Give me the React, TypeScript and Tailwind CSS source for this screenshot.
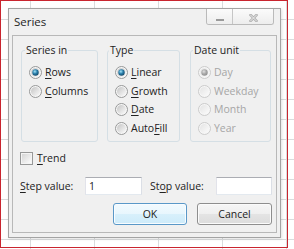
import React from "react";

function Radio({ checked = false, disabled = false }: { checked?: boolean; disabled?: boolean }) {
  return (
    <svg width="13" height="13" viewBox="0 0 13 13" className="shrink-0">
      <defs>
        <linearGradient id="rf-e" x1="0" y1="0" x2="1" y2="1">
          <stop offset="0" stopColor="#c4c4c4" />
          <stop offset="1" stopColor="#fbfbfb" />
        </linearGradient>
        <linearGradient id="rf-d" x1="0" y1="0" x2="1" y2="1">
          <stop offset="0" stopColor="#e4e4e4" />
          <stop offset="1" stopColor="#fbfbfb" />
        </linearGradient>
        <radialGradient id="rd-e" cx="0.4" cy="0.35" r="0.75">
          <stop offset="0" stopColor="#a6e4f8" />
          <stop offset="0.45" stopColor="#2b80ac" />
          <stop offset="1" stopColor="#0e3c5a" />
        </radialGradient>
        <radialGradient id="rd-d" cx="0.4" cy="0.35" r="0.75">
          <stop offset="0" stopColor="#e0e0e0" />
          <stop offset="0.5" stopColor="#a8a8a8" />
          <stop offset="1" stopColor="#8a8a8a" />
        </radialGradient>
      </defs>
      <circle cx="6.5" cy="6.5" r="6" fill="#f6f6f6" stroke={disabled ? "#cbcbcb" : "#979898"} />
      <circle cx="6.5" cy="6.5" r="4.5" fill={disabled ? "url(#rf-d)" : "url(#rf-e)"} />
      {checked && <circle cx="6.5" cy="6.5" r="3.2" fill={disabled ? "url(#rd-d)" : "url(#rd-e)"} />}
    </svg>
  );
}

function RadioRow({
  checked,
  disabled,
  children,
}: {
  checked?: boolean;
  disabled?: boolean;
  children: React.ReactNode;
}) {
  return (
    <div className="flex h-[18.7px] items-center gap-[3px]">
      <Radio checked={checked} disabled={disabled} />
      <span className={disabled ? "text-[#a6a6a6]" : "text-[#222222]"}>{children}</span>
    </div>
  );
}

function U({ children }: { children: React.ReactNode }) {
  return <span className="underline decoration-1 underline-offset-[1.5px]">{children}</span>;
}

function Group({
  title,
  width,
  legendMl,
  children,
}: {
  title: string;
  width: string;
  legendMl: string;
  children: React.ReactNode;
}) {
  return (
    <fieldset className={`${width} h-[98px] rounded-[3px] border border-[#d5dfe5] p-0`}>
      <legend className={`${legendMl} px-[1px] leading-[12px] text-[#222222]`}>{title}</legend>
      <div className="flex flex-col pl-[7px] pt-[7px]">{children}</div>
    </fieldset>
  );
}

function TextBox({ width, value }: { width: string; value?: string }) {
  return (
    <div
      className={`${width} flex h-[18px] items-center border border-[#abadb3] border-b-[#e3e9ef] border-l-[#e2e3ea] border-r-[#dbdfe6] bg-white pl-[3px] text-[#222222]`}
    >
      {value}
    </div>
  );
}

export default function App() {
  return (
    <div className="h-[249px] w-[294px] overflow-hidden bg-white bg-[linear-gradient(to_right,#dadcdd_1px,transparent_1px),linear-gradient(to_bottom,#dadcdd_1px,transparent_1px)] bg-[size:64px_20px] bg-[position:30px_19px] font-['Open_Sans',sans-serif] text-[10.5px] leading-[13px]">
      <div className="h-[248px] w-[288px] border border-[#c9252f] pl-[7px] pt-[7px]">
        {/* Dialog window */}
        <div className="flex h-[230px] w-[273px] flex-col border border-[#a3a3a3] bg-[#f0f0f0] shadow-[1px_1px_3px_rgba(0,0,0,0.12)]">
          {/* Title bar */}
          <div className="flex h-[26px] shrink-0 items-center justify-between pl-[5px] pr-[6px]">
            <span className="text-[11.5px] leading-[14px] text-[#1e1e1e]">Series</span>
            <div className="flex h-[16px] self-start overflow-hidden rounded-b-[3px] border border-t-0 border-[#bababa]">
              <div className="flex w-[26px] justify-center border-r border-[#c6c6c6] bg-[linear-gradient(to_bottom,#fbfbfb,#ededed)] pt-[10px]">
                <div className="h-[2px] w-[8px] bg-[#9a9a9a]" />
              </div>
              <div className="flex w-[40px] justify-center bg-[linear-gradient(to_bottom,#fbfbfb,#ededed)] pt-[5px]">
                <svg width="9" height="8" viewBox="0 0 9 8">
                  <path d="M1.5 1 L7.5 7 M7.5 1 L1.5 7" stroke="#b0b0b0" strokeWidth="2.6" strokeLinecap="square" />
                  <path d="M1.5 1 L7.5 7 M7.5 1 L1.5 7" stroke="#f4f4f4" strokeWidth="0.9" strokeLinecap="square" />
                </svg>
              </div>
            </div>
          </div>
          {/* Client area */}
          <div className="flex flex-1 flex-col px-[3px] pb-[4px]">
            <div className="flex flex-1 flex-col border border-[#b8b8b8] bg-[#f0f0f0]">
              <div className="ml-[8px] mt-[8px] flex">
                <Group title="Series in" width="w-[77px]" legendMl="ml-[3px]">
                  <RadioRow checked>
                    <U>R</U>ows
                  </RadioRow>
                  <RadioRow>
                    <U>C</U>olumns
                  </RadioRow>
                </Group>
                <div className="ml-[9px]">
                  <Group title="Type" width="w-[73px]" legendMl="ml-[1px]">
                    <RadioRow checked>
                      <U>L</U>inear
                    </RadioRow>
                    <RadioRow>
                      <U>G</U>rowth
                    </RadioRow>
                    <RadioRow>
                      <U>D</U>ate
                    </RadioRow>
                    <RadioRow>
                      Auto<U>F</U>ill
                    </RadioRow>
                  </Group>
                </div>
                <div className="ml-[10px]">
                  <Group title="Date unit" width="w-[81px]" legendMl="ml-[2px]">
                    <RadioRow checked disabled>
                      Day
                    </RadioRow>
                    <RadioRow disabled>Weekday</RadioRow>
                    <RadioRow disabled>Month</RadioRow>
                    <RadioRow disabled>Year</RadioRow>
                  </Group>
                </div>
              </div>

              {/* Trend */}
              <div className="ml-[7px] mt-[10px] flex h-[13px] items-center gap-[4px]">
                <div className="h-[13px] w-[13px] border border-[#979898] bg-[#f4f4f4] p-[1px]">
                  <div className="h-full w-full bg-[linear-gradient(135deg,#d6d6d6,#fbfbfb)]" />
                </div>
                <span className="text-[#222222]">
                  <U>T</U>rend
                </span>
              </div>

              {/* Step / Stop */}
              <div className="ml-[7px] mt-[12px] flex h-[18px] items-center">
                <span className="w-[65px] text-[#222222]">
                  <U>S</U>tep value:
                </span>
                <TextBox width="w-[57px]" value="1" />
                <span className="ml-[8px] w-[66px] text-[#222222]">
                  St<U>o</U>p value:
                </span>
                <TextBox width="w-[56px]" />
              </div>

              {/* Buttons */}
              <div className="ml-[100px] mt-[8px] flex">
                <button className="flex h-[22px] w-[74px] items-center justify-center rounded-[3px] border border-[#5a98c8] bg-[linear-gradient(to_bottom,#f2fafe_0%,#e8f6fd_50%,#d8f0fb_50%,#cdebfa_100%)] text-[#222222] shadow-[inset_0_0_0_1px_#f8fcff]">
                  OK
                </button>
                <button className="ml-[10px] flex h-[22px] w-[75px] items-center justify-center rounded-[3px] border border-[#8e8e8e] bg-[linear-gradient(to_bottom,#f6f6f6_0%,#efefef_50%,#e4e4e4_50%,#dcdcdc_100%)] text-[#222222] shadow-[inset_0_0_0_1px_#fbfbfb]">
                  Cancel
                </button>
              </div>
            </div>
          </div>
        </div>
      </div>
    </div>
  );
}
